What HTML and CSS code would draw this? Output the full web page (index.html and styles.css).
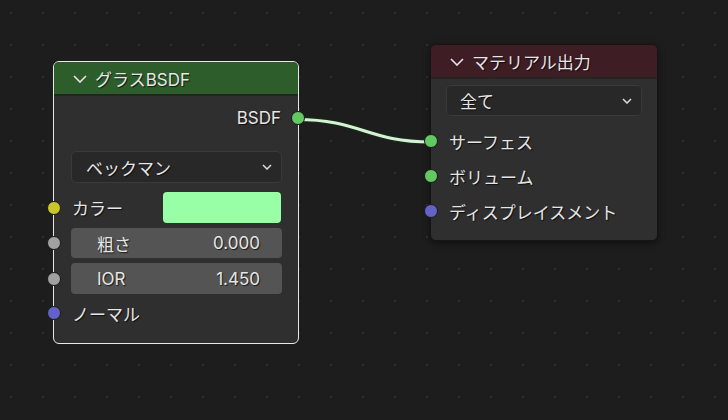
FILE: index.html
```html
<!doctype html>
<html lang="ja">
  <head>
    <meta charset="utf-8">
    <title>Node Editor</title>
    <link rel="stylesheet" href="styles.css">
  </head>
<body>
  <div class="canvas">
    <svg class="link" width="728" height="420">
      <path d="M297 119.5 C 360 119.5, 368 142, 431 142" stroke="#1b2a1b" stroke-width="5" fill="none"/>
      <path d="M297 119.5 C 360 119.5, 368 142, 431 142" stroke="#d4f2d4" stroke-width="3" fill="none"/>
    </svg>

    <div class="node node-glass">
      <div class="node-head head-green">
        <svg class="chev" width="14" height="8" viewBox="0 0 14 8"><polyline points="1,1 7,7 13,1" fill="none" stroke="#e6e6e6" stroke-width="1.6"/></svg>
        <span>グラスBSDF</span>
      </div>
      <div class="node-body">
        <div class="row out-row">
          <span>BSDF</span>
          <i class="sock sock-right green"></i>
        </div>
        <div class="select">
          <span>ベックマン</span>
          <svg width="10" height="6" viewBox="0 0 10 6"><polyline points="1,1 5,5 9,1" fill="none" stroke="#dcdcdc" stroke-width="1.5"/></svg>
        </div>
        <div class="row color-row">
          <i class="sock sock-left yellow"></i>
          <span>カラー</span>
          <div class="swatch"></div>
        </div>
        <div class="row field-row">
          <i class="sock sock-left gray"></i>
          <div class="field"><span class="fname">粗さ</span><span>0.000</span></div>
        </div>
        <div class="row field-row f2">
          <i class="sock sock-left gray"></i>
          <div class="field"><span class="fname">IOR</span><span>1.450</span></div>
        </div>
        <div class="row in-row">
          <i class="sock sock-left blue"></i>
          <span>ノーマル</span>
        </div>
      </div>
    </div>

    <div class="node node-output">
      <div class="node-head head-red">
        <svg class="chev" width="14" height="8" viewBox="0 0 14 8"><polyline points="1,1 7,7 13,1" fill="none" stroke="#e6e6e6" stroke-width="1.6"/></svg>
        <span>マテリアル出力</span>
      </div>
      <div class="node-body">
        <div class="select">
          <span>全て</span>
          <svg width="10" height="6" viewBox="0 0 10 6"><polyline points="1,1 5,5 9,1" fill="none" stroke="#dcdcdc" stroke-width="1.5"/></svg>
        </div>
        <div class="row in-row r1">
          <i class="sock sock-left green"></i>
          <span>サーフェス</span>
        </div>
        <div class="row in-row">
          <i class="sock sock-left green"></i>
          <span>ボリューム</span>
        </div>
        <div class="row in-row">
          <i class="sock sock-left blue"></i>
          <span>ディスプレイスメント</span>
        </div>
      </div>
    </div>
  </div>
</body>
</html>
```

FILE: styles.css
```css
body {
    margin: 0;
    background: #1d1d1d;
    font-family: Inter, "Noto Sans CJK JP", sans-serif;
    font-size: 17px;
    color: #e6e6e6;
}

.canvas {
    position: relative;
    width: 728px;
    height: 420px;
    overflow: hidden;
    background-color: #1d1d1d;
    background-image: radial-gradient(circle at 1px 1px, #2f2f2f 1.4px, transparent 1.5px);
    background-size: 32px 32px;
    background-position: 10px 12px;
}

.link {
    position: absolute;
    left: 0;
    top: 0;
}

.node {
    position: absolute;
    box-sizing: border-box;
    background: #2f2f2f;
    border-radius: 6px;
    text-shadow: 1px 1px 1px rgba(0, 0, 0, 0.7);
}

.node-glass {
    left: 53px;
    top: 61px;
    width: 246px;
    height: 283px;
    border: 1px solid #e8e8e8;
}

.node-output {
    left: 430px;
    top: 44px;
    width: 228px;
    height: 197px;
    border: 1px solid #151515;
    box-shadow: 0 2px 6px rgba(0, 0, 0, 0.5);
}

.node-head {
    height: 32px;
    display: flex;
    align-items: center;
    gap: 8px;
    padding-left: 19px;
    border-radius: 5px 5px 0 0;
    border-bottom: 2px solid #242424;
}

.head-green {
    background: #2d5d2b;
}

.head-red {
    background: #3e1d25;
}

.chev {
    margin-top: 1px;
}

.node-body {
    display: flex;
    flex-direction: column;
}

.node-glass .node-body {
    padding: 0 16px 0 17px;
}

.node-output .node-body {
    padding: 0 15px;
}

.row {
    position: relative;
    display: flex;
    align-items: center;
    height: 24px;
}

.out-row {
    justify-content: flex-end;
    margin-top: 10px;
    padding-right: 1px;
}

.select {
    display: flex;
    align-items: center;
    justify-content: space-between;
    box-sizing: border-box;
    height: 32px;
    padding: 0 9px 0 14px;
    background: #282828;
    border: 1px solid #3a3a3a;
    border-radius: 5px;
}

.node-glass .select {
    margin-top: 21px;
}

.node-output .select {
    margin-top: 6px;
    height: 31px;
    padding-left: 13px;
}

.color-row {
    height: 31px;
    margin-top: 9px;
    padding-left: 1px;
}

.swatch {
    margin-left: auto;
    width: 118px;
    height: 31px;
    background: #99ffa6;
    border-radius: 4px;
    margin-right: 1px;
}

.field-row {
    height: 30px;
    margin-top: 5px;
}

.f2 {
    height: 31px;
}

.field {
    flex: 1;
    height: 100%;
    display: flex;
    align-items: center;
    justify-content: space-between;
    padding: 0 22px 0 26px;
    background: #545454;
    border-radius: 4px;
}

.in-row {
    margin-top: 7px;
    padding-left: 1px;
}

.node-output .in-row {
    margin-top: 11px;
    padding-left: 3px;
}

.node-output .r1 {
    margin-top: 13px;
}

.sock {
    position: absolute;
    top: 50%;
    width: 12px;
    height: 12px;
    margin-top: -7px;
    border: 1px solid #1a1a1a;
    border-radius: 50%;
}

.node-glass .sock-left {
    left: -24px;
}

.node-output .sock-left {
    left: -22px;
}

.sock-right {
    right: -23px;
}

.green {
    background: #63c763;
}

.yellow {
    background: #c7c729;
}

.gray {
    background: #a1a1a1;
}

.blue {
    background: #6363c7;
}
```
